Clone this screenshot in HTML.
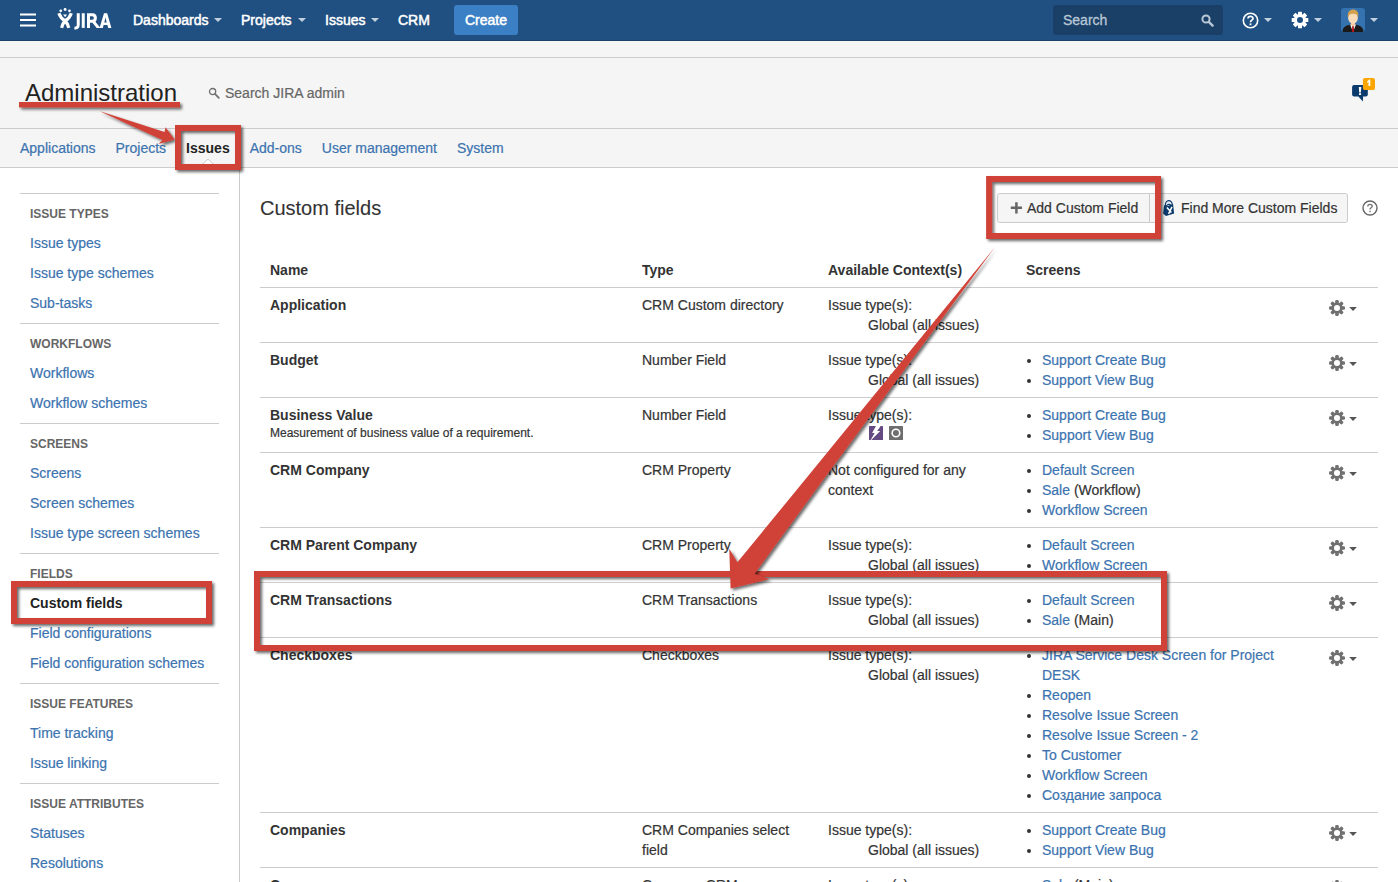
<!DOCTYPE html>
<html>
<head>
<meta charset="utf-8">
<title>Custom fields - JIRA</title>
<style>
*{box-sizing:border-box;margin:0;padding:0}
html,body{width:1398px;height:882px;overflow:hidden;background:#fff}
body{font-family:"Liberation Sans",sans-serif;font-size:14px;line-height:20px;color:#333;position:relative;-webkit-text-stroke:0.2px currentColor}
a{color:#3b73af;text-decoration:none}
/* ---------- top header ---------- */
#hdr{position:absolute;left:0;top:0;width:1398px;height:41px;background:#205081;border-bottom:1px solid #1b3f66}
#hdr .t{position:absolute;top:10px;height:20px;line-height:20px;color:#fff;font-size:14px;white-space:nowrap;-webkit-text-stroke:0.5px #fff}
#hdr .car{position:absolute;top:18px;width:0;height:0;border-left:4px solid transparent;border-right:4px solid transparent;border-top:4px solid #c3d0de}
#create{position:absolute;left:454px;top:5px;width:64px;height:30px;border-radius:3px;background:#3b7fc4;color:#fff;text-align:center;line-height:30px;font-size:14px;-webkit-text-stroke:0.5px #fff}
#qs{position:absolute;left:1053px;top:5px;width:170px;height:30px;border-radius:3px;background:#1a4067}
#qs span{position:absolute;left:10px;top:5px;color:#b9c7d6;font-size:14px;line-height:20px;-webkit-text-stroke:0.3px #b9c7d6}
/* ---------- admin header ---------- */
#sub{position:absolute;left:0;top:41px;width:1398px;height:127px;background:#f5f5f5}
.hl{position:absolute;left:0;width:1398px;height:1px;background:#ccc}
#h1{-webkit-text-stroke:0;position:absolute;left:25px;top:78px;font-size:24px;line-height:30px;color:#222;font-weight:normal;white-space:nowrap}
#sadm{position:absolute;left:225px;top:83px;font-size:14px;line-height:20px;color:#666;white-space:nowrap}
#tabs{position:absolute;left:10px;top:129px;height:38px;white-space:nowrap}
#tabs span{display:inline-block;padding:0 10px;line-height:38px;color:#3b73af;font-size:14px}
#tabs span.on{color:#222;font-weight:bold}
/* ---------- sidebar ---------- */
#side{position:absolute;left:0;top:168px;width:240px;height:714px;border-right:1px solid #ccc;background:#fff}
.grp{position:absolute;left:20px;width:199px;border-top:1px solid #ccc;padding-top:4px}
.grp h5{position:relative;top:1px;font-size:12px;line-height:30px;height:30px;color:#666;font-weight:bold;padding-left:10px;text-transform:uppercase;white-space:nowrap}
.grp div{font-size:14px;line-height:30px;height:30px;color:#3b73af;padding-left:10px;white-space:nowrap}
.grp div.on{color:#222;font-weight:bold}
/* ---------- main ---------- */
#h2{-webkit-text-stroke:0.1px currentColor;position:absolute;left:260px;top:195px;font-size:20px;line-height:26px;font-weight:normal;color:#333;white-space:nowrap}
.btn{position:absolute;top:193px;height:30px;border:1px solid #ccc;background:#f5f5f5;line-height:28px;font-size:14px;color:#333;white-space:nowrap}
#tbl{position:absolute;left:260px;top:253px;width:1118px;border-collapse:collapse;table-layout:fixed;font-size:14px;line-height:20px;color:#333;font-family:"Liberation Sans",sans-serif}
#tbl th,#tbl td{font-size:14px;font-family:"Liberation Sans",sans-serif}
#tbl th{text-align:left;font-weight:bold;padding:7px 10px;border-bottom:1px solid #ccc;vertical-align:top;color:#333;line-height:20px}
#tbl td{padding:7px 10px;border-bottom:1px solid #ccc;vertical-align:top;line-height:20px}
#tbl td.n{font-weight:bold}
#tbl td.n small{display:block;font-weight:normal;font-size:12px;line-height:16px;margin-top:0px}
.ind{padding-left:40px;white-space:nowrap}
ul{list-style:none}
ul li{position:relative;padding-left:16px}
ul li:before{content:"";position:absolute;left:1px;top:9px;width:4px;height:4px;border-radius:50%;background:#333}
.gear{position:absolute;left:1068px}
#tabs span.on,.grp div.on,.grp h5,#tbl th,#tbl td.n{-webkit-text-stroke:0}
#tbl td.n small{-webkit-text-stroke:0.2px currentColor}
/* ---------- annotations ---------- */
.rbox{position:absolute;border:6px solid #d04339;box-shadow:2px 2px 3px rgba(0,0,0,.55), inset 2px 2px 3px -1px rgba(0,0,0,.45)}
#ann{position:absolute;left:0;top:0;width:1398px;height:882px;pointer-events:none}
</style>
</head>
<body>

<!-- top header -->
<div id="hdr">
  <svg style="position:absolute;left:20px;top:13px" width="16" height="14" viewBox="0 0 16 14"><rect x="0" y="0.5" width="16" height="2" fill="#fff"/><rect x="0" y="6" width="16" height="2" fill="#fff"/><rect x="0" y="11.5" width="16" height="2" fill="#fff"/></svg>
  <!-- JIRA logo -->
  <svg id="logo" style="position:absolute;left:50px;top:4px" width="70" height="32" viewBox="50 4 70 32">
    <g fill="#fff">
      <circle cx="60.75" cy="10.8" r="1.35"/><circle cx="65.1" cy="9.5" r="1.45"/><circle cx="69.45" cy="10.8" r="1.35"/>
      <path d="M63.1 14.4 H67.1 L65.1 17.2 Z"/>
      <path d="M104 13.25 H107.2 L111.4 27.9 H108.2 L107.4 24.9 H103.6 L102.8 27.9 H99.5 Z M104.3 22.4 H106.7 L105.5 17.4 Z" fill-rule="evenodd"/>
    </g>
    <g fill="none" stroke="#fff" stroke-width="3.2">
      <path d="M58.9 13.3 Q60.6 18.4 65.2 21 Q67.6 23.4 68.8 27.9"/>
      <path d="M71.3 13.3 Q69.6 18.4 65 21 Q62.6 23.4 61.6 27.9"/>
    </g>
    <g fill="none" stroke="#fff" stroke-width="3">
      <path d="M78.25 13.25 V24.4 C78.25 27.2 77 28.3 74.4 27.9"/>
      <path d="M83.25 13.25 V27.9"/>
      <clipPath id="cpR"><rect x="84" y="12" width="17" height="15.9"/></clipPath><path clip-path="url(#cpR)" d="M88.5 29 V14.75 H92.3 C96.4 14.75 96.4 21.2 92.3 21.2 H88.5 M92.6 20.6 L99.4 29"/>
    </g>
  </svg>
  <div class="t" style="left:133px">Dashboards</div><div class="car" style="left:214px"></div>
  <div class="t" style="left:241px">Projects</div><div class="car" style="left:298px"></div>
  <div class="t" style="left:325px">Issues</div><div class="car" style="left:371px"></div>
  <div class="t" style="left:398px">CRM</div>
  <div id="create">Create</div>
  <div id="qs"><span>Search</span>
    <svg style="position:absolute;left:148px;top:9px" width="13" height="13" viewBox="0 0 13 13"><circle cx="5" cy="5" r="3.6" fill="none" stroke="#b9c7d6" stroke-width="2"/><path d="M7.8 7.8 L11.6 11.6" stroke="#b9c7d6" stroke-width="2.4" stroke-linecap="round"/></svg>
  </div>
  <!-- help -->
  <svg style="position:absolute;left:1242px;top:12px" width="17" height="17" viewBox="0 0 17 17"><circle cx="8.5" cy="8.5" r="7.2" fill="none" stroke="#fff" stroke-width="1.6"/><path d="M6 6.6 C6 3.6 11 3.6 11 6.4 C11 8.2 8.5 8.2 8.5 10.2" fill="none" stroke="#fff" stroke-width="1.7"/><rect x="7.6" y="11.4" width="1.8" height="1.8" fill="#fff"/></svg>
  <div class="car" style="left:1264px"></div>
  <!-- gear -->
  <svg style="position:absolute;left:1291px;top:11px" width="18" height="18" viewBox="-9 -9 18 18"><g fill="#fff"><circle r="6.1"/><g id="tt"><rect x="-2" y="-8.3" width="4" height="16.6" rx=".5"/></g><use href="#tt" transform="rotate(45)"/><use href="#tt" transform="rotate(90)"/><use href="#tt" transform="rotate(135)"/></g><circle r="3" fill="#205081"/></svg>
  <div class="car" style="left:1314px"></div>
  <!-- avatar -->
  <svg style="position:absolute;left:1341px;top:8px;border-radius:3px" width="24" height="24" viewBox="0 0 24 24"><rect width="24" height="24" fill="#3572b0"/><path d="M1.5 24 C1.5 18.6 6 17.6 9.4 16.6 L14.6 16.6 C18 17.6 22.5 18.6 22.5 24 Z" fill="#1a1a1a"/><path d="M9 16.6 L12 24 L15 16.6 Z" fill="#f2f2f2"/><path d="M11.3 17.6 L12.7 17.6 L13.1 24 L10.9 24 Z" fill="#b5121b"/><path d="M10 13 H14 V17 L12 18.4 L10 17 Z" fill="#f1c79c"/><ellipse cx="12" cy="9.8" rx="4.9" ry="6" fill="#fbdcb9"/><path d="M6.9 9.4 C6 3.4 9.6 1.4 12.6 1.6 C16 1.8 18 4.6 17.1 9.4 C16.4 6.8 15.2 5.6 12 5.8 C9.4 5.6 7.6 6.8 6.9 9.4 Z" fill="#d3a14e"/></svg>
  <div class="car" style="left:1370px"></div>
</div>

<!-- admin header -->
<div id="sub"></div>
<div class="hl" style="top:57px"></div>
<div class="hl" style="top:128px"></div>
<div class="hl" style="top:167px"></div>
<div id="h1">Administration</div>
<svg style="position:absolute;left:208px;top:87px" width="12" height="12" viewBox="0 0 12 12"><circle cx="4.6" cy="4.6" r="3.1" fill="none" stroke="#707070" stroke-width="1.3"/><path d="M7.2 7.2 L10.8 10.8" stroke="#707070" stroke-width="1.8" stroke-linecap="round"/></svg>
<div id="sadm">Search JIRA admin</div>
<div id="tabs"><span>Applications</span><span>Projects</span><span class="on">Issues</span><span>Add-ons</span><span>User management</span><span>System</span></div>
<svg style="position:absolute;left:199px;top:158px" width="18" height="10" viewBox="0 0 18 10"><path d="M0 9.5 L9 1 L18 9.5 Z" fill="#fff"/><path d="M0 9.5 L9 1 L18 9.5" fill="none" stroke="#ccc" stroke-width="1"/></svg>

<!-- feedback icon -->
<svg style="position:absolute;left:1345px;top:72px" width="36" height="36" viewBox="1345 72 36 36"><path d="M1354.1 85 H1365.8 Q1367.8 85 1367.8 87 V94.6 Q1367.8 96.6 1365.8 96.6 H1363.1 L1362.9 101.6 L1358.4 96.6 H1354.1 Q1352.1 96.6 1352.1 94.6 V87 Q1352.1 85 1354.1 85 Z" fill="#0b3a6c"/><path d="M1358.8 87.1 H1361.3 L1360.9 92.4 H1359.2 Z" fill="#fff"/><rect x="1359" y="93.2" width="2.1" height="1.8" fill="#fff"/><rect x="1362.9" y="77.9" width="12.1" height="12.2" rx="2.2" fill="#fba600"/><path d="M1367.3 81.3 L1369.3 79.4 H1370.3 V86.1 H1368.5 V81.9 L1367.3 82.9 Z" fill="#fff"/></svg>

<!-- sidebar -->
<div id="side"></div>
<div class="grp" style="top:193px"><h5>Issue types</h5><div>Issue types</div><div>Issue type schemes</div><div>Sub-tasks</div></div>
<div class="grp" style="top:323px"><h5>Workflows</h5><div>Workflows</div><div>Workflow schemes</div></div>
<div class="grp" style="top:423px"><h5>Screens</h5><div>Screens</div><div>Screen schemes</div><div>Issue type screen schemes</div></div>
<div class="grp" style="top:553px"><h5>Fields</h5><div class="on">Custom fields</div><div>Field configurations</div><div>Field configuration schemes</div></div>
<div class="grp" style="top:683px"><h5>Issue features</h5><div>Time tracking</div><div>Issue linking</div></div>
<div class="grp" style="top:783px"><h5>Issue attributes</h5><div>Statuses</div><div>Resolutions</div></div>

<!-- main -->
<div id="h2">Custom fields</div>
<div class="btn" style="left:997px;width:153px;border-radius:3px 0 0 3px;padding-left:29px">Add Custom Field</div>
<svg style="position:absolute;left:1010px;top:202px" width="12" height="12" viewBox="0 0 12 12"><path d="M6.4 0.2 V11.4 M0.8 5.8 H12" stroke="#666" stroke-width="2.5"/></svg>
<div class="btn" style="left:1149px;width:199px;border-radius:0 3px 3px 0;padding-left:31px">Find More Custom Fields</div>
<svg style="position:absolute;left:1160px;top:196px" width="18" height="22" viewBox="1160 196 18 22"><path d="M1165.4 205.4 C1165 199.2 1172.2 199 1172.3 204.8 L1170.8 205.6 C1170.6 203.8 1166.8 204 1166.8 206 Z" fill="#e4eaf2" stroke="#0b3a6c" stroke-width="1.1"/><path d="M1164.1 205 L1166.6 206.2 L1173.1 204.2 L1174.1 213.4 L1166 216 L1163.1 213.6 Z" fill="#0b3a6c"/><path d="M1166.9 207.6 L1171.4 212.6 M1172 206.8 L1168.6 213.8" stroke="#fff" stroke-width="1.5" fill="none"/></svg>
<svg style="position:absolute;left:1362px;top:200px" width="16" height="16" viewBox="0 0 16 16"><circle cx="8" cy="8" r="7" fill="none" stroke="#666" stroke-width="1.4"/><path d="M5.8 6.4 C5.8 3.8 10.2 3.8 10.2 6.2 C10.2 7.8 8 7.8 8 9.6" fill="none" stroke="#707070" stroke-width="1.3"/><rect x="7.3" y="10.8" width="1.4" height="1.4" fill="#707070"/></svg>

<table id="tbl">
<colgroup><col style="width:372px"><col style="width:186px"><col style="width:198px"><col style="width:290px"><col style="width:72px"></colgroup>
<tr><th>Name</th><th>Type</th><th>Available Context(s)</th><th>Screens</th><th></th></tr>
<tr><td class="n">Application</td><td>CRM Custom directory</td><td>Issue type(s):<div class="ind">Global (all issues)</div></td><td></td><td></td></tr>
<tr><td class="n">Budget</td><td>Number Field</td><td>Issue type(s):<div class="ind">Global (all issues)</div></td><td><ul><li><a>Support Create Bug</a></li><li><a>Support View Bug</a></li></ul></td><td></td></tr>
<tr><td class="n">Business Value<small>Measurement of business value of a requirement.</small></td><td>Number Field</td><td>Issue type(s):<div class="ind" style="height:20px"></div></td><td><ul><li><a>Support Create Bug</a></li><li><a>Support View Bug</a></li></ul></td><td></td></tr>
<tr><td class="n">CRM Company</td><td>CRM Property</td><td>Not configured for any context</td><td><ul><li><a>Default Screen</a></li><li><a>Sale</a> (Workflow)</li><li><a>Workflow Screen</a></li></ul></td><td></td></tr>
<tr><td class="n">CRM Parent Company</td><td>CRM Property</td><td>Issue type(s):<div class="ind">Global (all issues)</div></td><td><ul><li><a>Default Screen</a></li><li><a>Workflow Screen</a></li></ul></td><td></td></tr>
<tr><td class="n">CRM Transactions</td><td>CRM Transactions</td><td>Issue type(s):<div class="ind">Global (all issues)</div></td><td><ul><li><a>Default Screen</a></li><li><a>Sale</a> (Main)</li></ul></td><td></td></tr>
<tr><td class="n">Checkboxes</td><td>Checkboxes</td><td>Issue type(s):<div class="ind">Global (all issues)</div></td><td><ul><li><a>JIRA Service Desk Screen for Project DESK</a></li><li><a>Reopen</a></li><li><a>Resolve Issue Screen</a></li><li><a>Resolve Issue Screen - 2</a></li><li><a>To Customer</a></li><li><a>Workflow Screen</a></li><li><a>Создание запроса</a></li></ul></td><td></td></tr>
<tr><td class="n">Companies</td><td>CRM Companies select field</td><td>Issue type(s):<div class="ind">Global (all issues)</div></td><td><ul><li><a>Support Create Bug</a></li><li><a>Support View Bug</a></li></ul></td><td></td></tr>
<tr><td class="n">Company</td><td>Company CRM</td><td>Issue type(s):<div class="ind">Global (all issues)</div></td><td><ul><li><a>Sale</a> (Main)</li></ul></td><td></td></tr>
</table>

<!-- issue type icons in Business Value row -->
<svg style="position:absolute;left:869px;top:426px" width="36" height="14" viewBox="0 0 36 14"><rect x="0" y="0" width="14" height="14" rx=".6" fill="#654982"/><path d="M6.95 0 L11.7 0 L8.2 4.9 L11.2 4.9 L2.3 14 L1.7 14 L5.7 7.1 L3.1 7.1 Z" fill="#fff"/><rect x="20" y="0" width="14" height="14" rx=".6" fill="#6e6e6e"/><circle cx="26.95" cy="7" r="3.8" fill="none" stroke="#fff" stroke-width="1.6"/></svg>

<!-- row gears -->
<svg width="0" height="0" style="position:absolute"><defs>
<g id="rg"><g fill="#707070"><circle cx="9" cy="8" r="5.6"/><g id="rt"><rect x="7.2" y="0" width="3.6" height="16" rx="1.3"/></g><use href="#rt" transform="rotate(45 9 8)"/><use href="#rt" transform="rotate(90 9 8)"/><use href="#rt" transform="rotate(135 9 8)"/></g><circle cx="9" cy="8" r="3.05" fill="#fff"/><path d="M21.2 7 H28.9 L25.05 11 Z" fill="#555"/></g>
</defs></svg>
<svg class="g" style="position:absolute;left:1328px;top:300px" width="30" height="16"><use href="#rg"/></svg>
<svg class="g" style="position:absolute;left:1328px;top:355px" width="30" height="16"><use href="#rg"/></svg>
<svg class="g" style="position:absolute;left:1328px;top:410px" width="30" height="16"><use href="#rg"/></svg>
<svg class="g" style="position:absolute;left:1328px;top:465px" width="30" height="16"><use href="#rg"/></svg>
<svg class="g" style="position:absolute;left:1328px;top:540px" width="30" height="16"><use href="#rg"/></svg>
<svg class="g" style="position:absolute;left:1328px;top:595px" width="30" height="16"><use href="#rg"/></svg>
<svg class="g" style="position:absolute;left:1328px;top:650px" width="30" height="16"><use href="#rg"/></svg>
<svg class="g" style="position:absolute;left:1328px;top:825px" width="30" height="16"><use href="#rg"/></svg>
<svg class="g" style="position:absolute;left:1328px;top:880px" width="30" height="16"><use href="#rg"/></svg>

<!-- annotations -->
<svg id="ann" viewBox="0 0 1398 882">
  <defs>
    <filter id="sh" x="-10%" y="-10%" width="130%" height="130%"><feGaussianBlur in="SourceAlpha" stdDeviation="1.5"/><feOffset dx="2" dy="2"/><feComponentTransfer><feFuncA type="linear" slope="0.6"/></feComponentTransfer><feMerge><feMergeNode/><feMergeNode in="SourceGraphic"/></feMerge></filter>
  </defs>
  <g fill="#d04339" filter="url(#sh)">
    <rect x="19" y="102" width="161" height="5.4"/>
    <path d="M99.3 111 L164.5 132 L165.6 127.2 L174.6 139.4 L158.5 144 L162.4 140 Z"/>
  </g>
  <g fill="none" stroke="#d04339" stroke-width="6" filter="url(#sh)">
    <rect x="178" y="128" width="60" height="39"/>
    <rect x="989.1" y="179" width="168.9" height="57"/>
    <rect x="257" y="574" width="907" height="74"/>
    <rect x="14" y="584" width="195" height="37"/>
  </g>
  <g fill="#d04339" filter="url(#sh)">
    <path d="M995 247 L823.1 480 L754.4 574.1 L769.7 579 L730.6 588.6 L729.3 548.7 L737.4 562.3 L804.8 480 Z"/>
  </g>
</svg>
</body>
</html>
